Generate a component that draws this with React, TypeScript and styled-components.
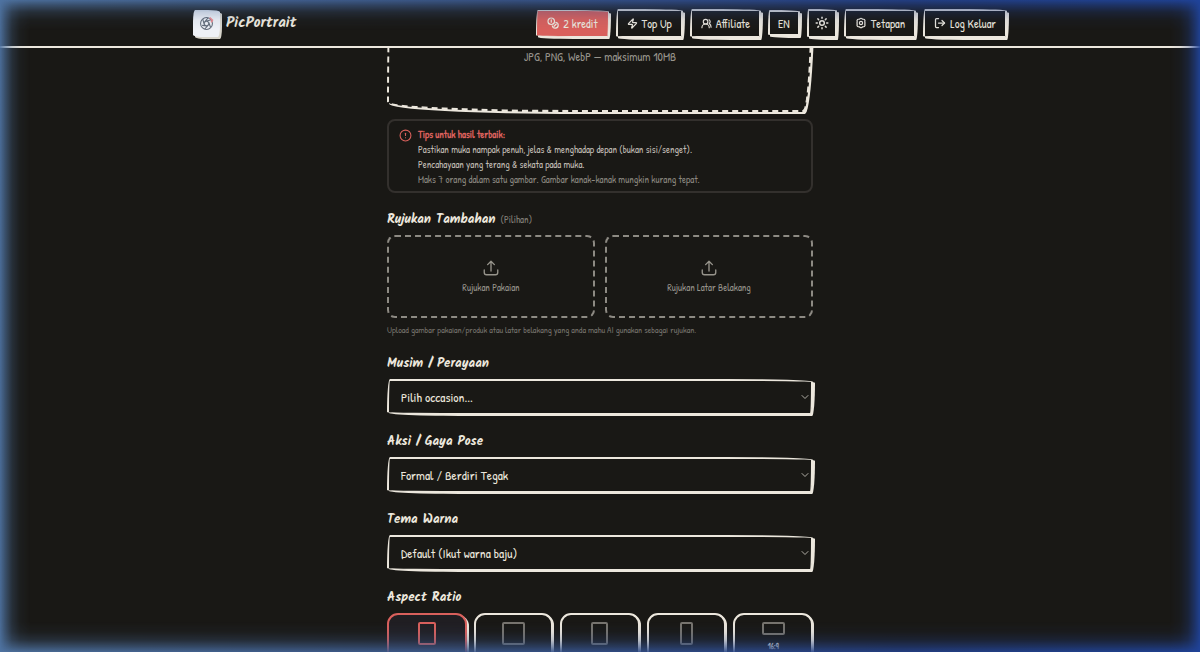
import React, { useState } from "react";
import styled, { createGlobalStyle, css } from "styled-components";
import { ChevronDown, CircleAlert, LogOut, Sun, UsersRound, Zap } from "lucide-react";

const ink = "#ece7dd";
const paper = "#191815";
const accent = "#d9605c";
const handFont = `"Patrick Hand", "Liberation Sans Narrow", Lato, sans-serif`;
const titleFont = `Kalam, Lato, sans-serif`;

const GlobalStyle = createGlobalStyle`
  *, *::before, *::after { box-sizing: border-box; }
  html { background: ${paper}; scrollbar-width: none; }
  body { margin: 0; background: ${paper}; color: ${ink}; font-family: ${handFont}; font-size: 12px; }
  button, select { font: inherit; color: inherit; }
`;

/* Soft blue halo round the window edges */
const EdgeGlow = styled.div`
  --fade: rgba(0, 0, 0, 0.92) 0, rgba(0, 0, 0, 0.62) 5px, rgba(0, 0, 0, 0.26) 12px, rgba(0, 0, 0, 0.07) 20px,
    transparent 30px;
  position: fixed;
  inset: 0;
  z-index: 10;
  pointer-events: none;
  background: linear-gradient(to right, #4f74a3, #3b588c 40%, #24418a 75%, #20449c);
  mask: linear-gradient(to right, var(--fade)), linear-gradient(to left, var(--fade)),
    linear-gradient(to bottom, var(--fade)), linear-gradient(to top, var(--fade));
`;

const Header = styled.header`
  position: sticky;
  top: 0;
  z-index: 5;
  background: ${paper};
  border-bottom: 2px solid ${ink};
`;

const HeaderInner = styled.div`
  display: flex;
  align-items: center;
  justify-content: space-between;
  max-width: 814px;
  height: 46px;
  margin: 0 auto;
`;

const Brand = styled.a`
  display: flex;
  align-items: center;
  gap: 6px;
  color: ${ink};
  font: 700 15px/20px ${titleFont};
  text-decoration: none;
`;

const LogoTile = styled.span`
  display: grid;
  place-items: center;
  width: 27px;
  height: 27px;
  background: #eff1f6;
  border-radius: 2px 12px 2px 12px / 12px 2px 12px 2px;
  box-shadow: 2px 2px 0 #d8d5cb;
`;

const Nav = styled.nav`
  display: flex;
  align-items: center;
  gap: 7px;
`;

const NavButton = styled.button<{ $filled?: boolean; $compact?: boolean; $icon?: boolean }>`
  display: flex;
  align-items: center;
  justify-content: center;
  gap: 4px;
  height: ${(p) => (p.$compact ? 26 : 29)}px;
  padding: 0 ${(p) => (p.$icon ? 6 : p.$compact ? 8 : 9)}px;
  border: 2px solid ${ink};
  border-radius: 2px 40px 2px 40px / 28px 2px 28px 2px;
  background: ${paper};
  box-shadow: 2px 2px 0 ${ink};
  white-space: nowrap;
  cursor: pointer;
  ${(p) =>
    p.$filled &&
    css`
      height: 27px;
      padding: 0 10px;
      border-width: 1px;
      background: ${accent};
    `}
`;

const Main = styled.main`
  display: flex;
  flex-direction: column;
  gap: 16px;
  max-width: 426px;
  margin: -137px auto 0;
`;

const Stack = styled.section<{ $gap: number }>`
  display: flex;
  flex-direction: column;
  gap: ${(p) => p.$gap}px;
`;

const DropZone = styled.button`
  display: flex;
  align-items: flex-end;
  justify-content: center;
  width: 100%;
  height: 201px;
  padding: 0 0 43px;
  border: 2px dashed ${ink};
  border-radius: 12px 225px 12px 225px / 225px 12px 170px 12px;
  background: ${paper};
  box-shadow: 2px 2px 0 ${ink};
  color: #97948c;
  line-height: 20px;
  cursor: pointer;
`;

const Tips = styled.aside`
  display: flex;
  align-items: flex-start;
  gap: 6px;
  padding: 6px 10px 4px;
  border: 2px solid #33302d;
  border-radius: 8px;
  color: ${accent};
`;

const TipsIcon = styled(CircleAlert)`
  flex: none;
  margin: 2px 0;
`;

const TipLine = styled.p<{ $tone: string; $strong?: boolean }>`
  margin: 0;
  color: ${(p) => p.$tone};
  font-size: 10px;
  font-weight: ${(p) => (p.$strong ? 700 : 400)};
  line-height: 15px;
`;

const labelText = css`
  margin: 0;
  font: 700 13px/22px ${titleFont};
`;

const SectionTitle = styled.h2`
  ${labelText}
`;

const FieldLabel = styled.label`
  ${labelText}
`;

const Optional = styled.small`
  color: #84817a;
  font: 400 10px/20px ${handFont};
`;

const ReferenceArea = styled.div`
  display: flex;
  flex-direction: column;
  gap: 6px;
`;

const ReferenceGrid = styled.div`
  display: grid;
  grid-template-columns: 1fr 1fr;
  gap: 10px;
`;

const ReferenceButton = styled.button`
  display: flex;
  flex-direction: column;
  align-items: center;
  justify-content: center;
  gap: 4px;
  height: 83px;
  border: 2px dashed #8d8a83;
  border-radius: 8px;
  background: none;
  color: #97948c;
  font-size: 10px;
  line-height: 14px;
  cursor: pointer;
`;

const Hint = styled.p`
  margin: 0;
  color: #74716b;
  font-size: 9px;
  line-height: 13px;
`;

const SelectBox = styled.div`
  display: grid;
  align-items: center;

  > * {
    grid-area: 1 / 1;
  }

  > svg {
    justify-self: end;
    margin-right: 2px;
    color: #b0ada5;
    pointer-events: none;
  }
`;

const Select = styled.select`
  appearance: none;
  width: 100%;
  height: 36px;
  padding: 0 12px;
  border: 2px solid ${ink};
  border-radius: 3px 90px 3px 90px / 34px 3px 34px 3px;
  background: ${paper};
  box-shadow: 2px 1px 0 ${ink};
  font-size: 13px;
`;

const RatioGrid = styled.div`
  display: grid;
  grid-template-columns: repeat(5, 1fr);
  gap: 7px;
`;

const RatioCard = styled.button<{ $active: boolean }>`
  display: flex;
  flex-direction: column;
  align-items: center;
  gap: 6px;
  height: 64px;
  padding: 7px 0 0;
  border: 2px solid ${(p) => (p.$active ? accent : ink)};
  border-radius: 11px;
  background: ${(p) => (p.$active ? "#201e22" : paper)};
  box-shadow: ${(p) => (p.$active ? `2px 2px 0 ${ink}` : `1px 1px 0 ${ink}`)};
  color: ${(p) => (p.$active ? accent : "#77746e")};
  cursor: pointer;
`;

const RatioShape = styled.span<{ $w: number; $h: number }>`
  width: ${(p) => p.$w}px;
  height: ${(p) => p.$h}px;
  border: 2px solid currentColor;
  border-radius: 2px;
`;

const RatioName = styled.span`
  color: ${ink};
  font-size: 8px;
  font-weight: 700;
  line-height: 10px;
`;

const Glyph = ({ size, weight = 2.2, children }: { size: number; weight?: number; children: React.ReactNode }) => (
  <svg
    width={size}
    height={size}
    viewBox="0 0 24 24"
    fill="none"
    stroke="currentColor"
    strokeWidth={weight}
    strokeLinecap="round"
    strokeLinejoin="round"
    aria-hidden="true"
  >
    {children}
  </svg>
);

const CoinsIcon = () => (
  <Glyph size={12} weight={2.4}>
    <circle cx="8.500" cy="8.500" r="6.500" />
    <path d="M8.500 5.500v5" />
    <path d="M17.500 10.500a6 6 0 1 1-7 7" />
    <path d="M14 18.500l4.500-4.500" />
  </Glyph>
);

const GearIcon = () => (
  <Glyph size={12} weight={2.4}>
    <path d="M9.800 3.500a3 3 0 0 1 4.400 0l1 .9 2.300.1a3 3 0 0 1 2.300 3.900l-.3 1.600.6 1.800a3 3 0 0 1 0 .4l-.6 1.800.3 1.600a3 3 0 0 1-2.300 3.900l-2.300.1-1 .9a3 3 0 0 1-4.400 0l-1-.9-2.300-.1a3 3 0 0 1-2.300-3.900l.3-1.600-.6-1.800v-.4l.6-1.800-.3-1.600a3 3 0 0 1 2.300-3.900l2.300-.1z" />
    <circle cx="12" cy="12" r="3.200" />
  </Glyph>
);

const UploadIcon = () => (
  <Glyph size={18} weight={1.8}>
    <path d="M12 16V3M7.500 7.500L12 3l4.500 4.500" />
    <path d="M3 14.500V18a3 3 0 0 0 3 3h12a3 3 0 0 0 3-3v-3.500" />
  </Glyph>
);

const Aperture = () => (
  <svg width="15" height="15" viewBox="0 0 24 24" fill="none" stroke="#626b78" strokeWidth="1.7" aria-hidden="true">
    <circle cx="12" cy="12" r="9.5" />
    <path d="M12 8l3.5 2v4L12 16l-3.500-2v-4zM12 8l6.500-1.500M15.500 10l3 8M15.500 14l-6.500 7M12 16l-7-1M8.500 14L6 5M8.500 10l6-7" />
    <path d="M17 2.500l4.500 4-2 3.500" stroke="#ef8b90" strokeWidth="2.500" />
  </svg>
);

const fields = [
  { id: "season", label: "Musim / Perayaan", value: "Pilih occasion..." },
  { id: "pose", label: "Aksi / Gaya Pose", value: "Formal / Berdiri Tegak" },
  { id: "theme", label: "Tema Warna", value: "Default (Ikut warna baju)" },
];

const ratios = [
  { name: "4:5", w: 18, h: 23 },
  { name: "1:1", w: 23, h: 23 },
  { name: "3:4", w: 17, h: 23 },
  { name: "9:16", w: 13, h: 23 },
  { name: "16:9", w: 23, h: 13, caption: true },
];

export default function App() {
  const [ratio, setRatio] = useState("4:5");

  return (
    <>
      <GlobalStyle />
      <Header>
        <HeaderInner>
          <Brand href="#">
            <LogoTile>
              <Aperture />
            </LogoTile>
            PicPortrait
          </Brand>
          <Nav>
            <NavButton $filled><CoinsIcon />2 kredit</NavButton>
            <NavButton><Zap size={11} strokeWidth={2.5} />Top Up</NavButton>
            <NavButton><UsersRound size={11} strokeWidth={2.5} />Affiliate</NavButton>
            <NavButton $compact>EN</NavButton>
            <NavButton $icon aria-label="Tema"><Sun size={14} strokeWidth={2.5} /></NavButton>
            <NavButton><GearIcon />Tetapan</NavButton>
            <NavButton><LogOut size={12} strokeWidth={2.5} />Log Keluar</NavButton>
          </Nav>
        </HeaderInner>
      </Header>

      <Main>
        <Stack $gap={7}>
          <DropZone>JPG, PNG, WebP — maksimum 10MB</DropZone>
          <Tips>
            <TipsIcon size={13} />
            <div>
              <TipLine $tone={accent} $strong>Tips untuk hasil terbaik:</TipLine>
              <TipLine $tone="#c2beb5">Pastikan muka nampak penuh, jelas &amp; menghadap depan (bukan sisi/senget).</TipLine>
              <TipLine $tone="#c2beb5">Pencahayaan yang terang &amp; sekata pada muka.</TipLine>
              <TipLine $tone="#8c8981">Maks 7 orang dalam satu gambar. Gambar kanak-kanak mungkin kurang tepat.</TipLine>
            </div>
          </Tips>
        </Stack>

        <Stack $gap={4}>
          <SectionTitle>
            Rujukan Tambahan <Optional>(Pilihan)</Optional>
          </SectionTitle>
          <ReferenceArea>
            <ReferenceGrid>
              <ReferenceButton><UploadIcon />Rujukan Pakaian</ReferenceButton>
              <ReferenceButton><UploadIcon />Rujukan Latar Belakang</ReferenceButton>
            </ReferenceGrid>
            <Hint>Upload gambar pakaian/produk atau latar belakang yang anda mahu AI gunakan sebagai rujukan.</Hint>
          </ReferenceArea>
        </Stack>

        {fields.map((f) => (
          <Stack $gap={4} key={f.id}>
            <FieldLabel htmlFor={f.id}>{f.label}</FieldLabel>
            <SelectBox>
              <Select id={f.id}>
                <option>{f.value}</option>
              </Select>
              <ChevronDown size={12} />
            </SelectBox>
          </Stack>
        ))}

        <Stack $gap={4}>
          <SectionTitle>Aspect Ratio</SectionTitle>
          <RatioGrid>
            {ratios.map((r) => (
              <RatioCard
                key={r.name}
                aria-label={r.name}
                aria-pressed={ratio === r.name}
                $active={ratio === r.name}
                onClick={() => setRatio(r.name)}
              >
                <RatioShape $w={r.w} $h={r.h} />
                {r.caption && <RatioName>{r.name}</RatioName>}
              </RatioCard>
            ))}
          </RatioGrid>
        </Stack>
      </Main>
      <EdgeGlow />
    </>
  );
}
